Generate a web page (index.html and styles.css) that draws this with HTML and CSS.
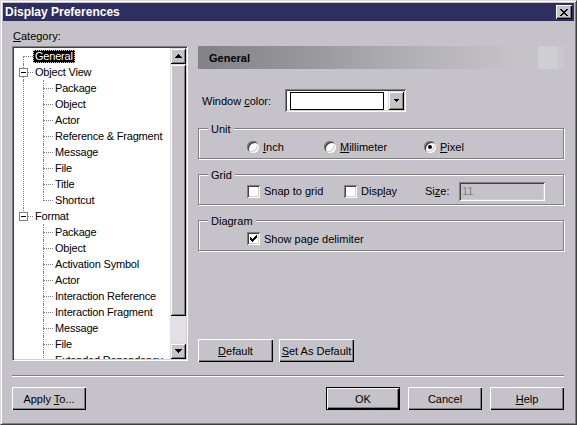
FILE: index.html
```html
<!DOCTYPE html>
<html lang="en">
<head>
    <meta charset="UTF-8">
    <title>Display Preferences</title>
    <link rel="stylesheet" href="styles.css">
</head>
<body>

<div class="dialog">
    <div class="titlebar">
        <span class="title">Display Preferences</span>
        <button class="close" type="button">
            <svg width="8" height="7" viewBox="0 0 8 7" shape-rendering="crispEdges"><path d="M0 0h2v1H0zM6 0h2v1H6zM1 1h2v1H1zM5 1h2v1H5zM2 2h4v1H2zM3 3h2v1H3zM2 4h4v1H2zM1 5h2v1H1zM5 5h2v1H5zM0 6h2v1H0zM6 6h2v1H6z" fill="#000"/></svg>
        </button>
    </div>

    <div class="content">
        <div class="main">
            <div class="cat-label"><u>C</u>ategory:</div>

            <div class="tree-box">
                <div class="tree">
                    <div class="node root first"><span class="lbl sel">General</span></div>
                    <div class="node root"><span class="toggle"></span><span class="lbl">Object View</span></div>
                    <div class="kids more">
                        <div class="node child"><span class="lbl">Package</span></div>
                        <div class="node child"><span class="lbl">Object</span></div>
                        <div class="node child"><span class="lbl">Actor</span></div>
                        <div class="node child"><span class="lbl">Reference &amp; Fragment</span></div>
                        <div class="node child"><span class="lbl">Message</span></div>
                        <div class="node child"><span class="lbl">File</span></div>
                        <div class="node child"><span class="lbl">Title</span></div>
                        <div class="node child last"><span class="lbl">Shortcut</span></div>
                    </div>
                    <div class="node root end"><span class="toggle"></span><span class="lbl">Format</span></div>
                    <div class="kids">
                        <div class="node child"><span class="lbl">Package</span></div>
                        <div class="node child"><span class="lbl">Object</span></div>
                        <div class="node child"><span class="lbl">Activation Symbol</span></div>
                        <div class="node child"><span class="lbl">Actor</span></div>
                        <div class="node child"><span class="lbl">Interaction Reference</span></div>
                        <div class="node child"><span class="lbl">Interaction Fragment</span></div>
                        <div class="node child"><span class="lbl">Message</span></div>
                        <div class="node child"><span class="lbl">File</span></div>
                        <div class="node child"><span class="lbl">Extended Dependency</span></div>
                    </div>
                </div>
                <div class="vscroll">
                    <div class="sb-btn">
                        <svg width="7" height="4" shape-rendering="crispEdges"><path d="M3 0h1v1H3zM2 1h3v1H2zM1 2h5v1H1zM0 3h7v1H0z" fill="#000"/></svg>
                    </div>
                    <div class="sb-thumb"></div>
                    <div class="sb-track"></div>
                    <div class="sb-btn">
                        <svg width="7" height="4" shape-rendering="crispEdges"><path d="M0 0h7v1H0zM1 1h5v1H1zM2 2h3v1H2zM3 3h1v1H3z" fill="#000"/></svg>
                    </div>
                </div>
            </div>

            <div class="panel">
                <div class="panel-head">General</div>

                <div class="field-row">
                    <label>Window <u>c</u>olor:</label>
                    <div class="combo">
                        <div class="swatch"></div>
                        <div class="drop">
                            <svg width="5" height="3" shape-rendering="crispEdges"><path d="M0 0h5v1H0zM1 1h3v1H1zM2 2h1v1H2z" fill="#000"/></svg>
                        </div>
                    </div>
                </div>

                <div class="group unit">
                    <span class="group-title">Unit</span>
                    <div class="opt"><span class="radio"></span><span><u>I</u>nch</span></div>
                    <div class="opt"><span class="radio"></span><span><u>M</u>illimeter</span></div>
                    <div class="opt"><span class="radio on"></span><span><u>P</u>ixel</span></div>
                </div>

                <div class="group grid">
                    <span class="group-title">Grid</span>
                    <div class="opt"><span class="check"></span><span>Snap to <u>g</u>rid</span></div>
                    <div class="opt"><span class="check"></span><span>Disp<u>l</u>ay</span></div>
                    <div class="opt"><span>Si<u>z</u>e:</span></div>
                    <div class="textbox">11</div>
                </div>

                <div class="group">
                    <span class="group-title">Diagram</span>
                    <div class="opt">
                        <span class="check">
                            <svg width="7" height="7" shape-rendering="crispEdges"><path d="M6 0h1v3H6zM5 1h1v3H5zM4 2h1v3H4zM3 3h1v3H3zM2 4h1v3H2zM1 3h1v3H1zM0 2h1v3H0z" fill="#000"/></svg>
                        </span>
                        <span>Show page delimiter</span>
                    </div>
                </div>

                <div class="panel-buttons">
                    <button class="btn" type="button"><u>D</u>efault</button>
                    <button class="btn" type="button"><u>S</u>et As Default</button>
                </div>
            </div>
        </div>

        <div class="separator"></div>

        <div class="footer">
            <button class="btn apply" type="button">Apply <u>T</u>o...</button>
            <button class="btn default" type="button">OK</button>
            <button class="btn" type="button">Cancel</button>
            <button class="btn" type="button"><u>H</u>elp</button>
        </div>
    </div>
</div>

</body>
</html>
```

FILE: styles.css
```css
body {
    margin: 0;
    font-family: "Liberation Sans", Arial, sans-serif;
    font-size: 11px;
    color: #000;
    background: #c5c3c9;
}
u {
    text-decoration: underline;
    text-underline-offset: 1px;
}
.dialog {
    width: 577px;
    height: 425px;
    box-sizing: border-box;
    display: flex;
    flex-direction: column;
    padding: 1px;
    background: #c5c3c9;
    border: 1px solid;
    border-color: #dcdadf #404040 #404040 #dcdadf;
    box-shadow: inset 1px 1px #fff, inset -1px -1px #808080;
}
.titlebar {
    height: 18px;
    margin: 1px;
    flex: none;
    display: flex;
    align-items: center;
    justify-content: space-between;
    padding: 0 2px;
    background: #2f2e60;
    color: #fff;
    font-weight: bold;
    font-size: 12px;
}
.close {
    width: 16px;
    height: 14px;
    padding: 0;
    border: 0;
    display: flex;
    align-items: center;
    justify-content: center;
    background: #c5c3c9;
    box-shadow: inset 1px 1px #fff, inset -1px -1px #000, inset -2px -2px #808080;
}

.content {
    flex: 1;
    display: flex;
    flex-direction: column;
    padding: 8px 11px 0 10px;
}
.main {
    display: grid;
    grid-template-columns: 176px 1fr;
    grid-template-rows: 16px 316px;
    column-gap: 10px;
}
.cat-label {
    line-height: 12px;
    padding-left: 1px;
}

/* tree view */
.tree-box {
    grid-column: 1;
    grid-row: 2;
    height: 315px;
    box-sizing: border-box;
    display: flex;
    padding: 1px;
    background: #fff;
    border: 1px solid;
    border-color: #808080 #fff #fff #808080;
    box-shadow: inset 1px 1px #404040, inset -1px -1px #d4d0c8;
}
.tree {
    flex: 1;
    overflow: hidden;
}
.kids {
    position: relative;
}
.kids.more::before {
    content: "";
    position: absolute;
    left: 9px;
    top: 0;
    bottom: 0;
    border-left: 1px dotted #808080;
}
.node {
    position: relative;
    height: 16px;
    padding-left: 19px;
    display: flex;
    align-items: center;
}
.node.child {
    padding-left: 39px;
}
.node::before {
    content: "";
    position: absolute;
    left: 9px;
    top: 8px;
    width: 10px;
    border-top: 1px dotted #808080;
}
.node::after {
    content: "";
    position: absolute;
    left: 9px;
    top: 0;
    bottom: 0;
    border-left: 1px dotted #808080;
}
.node.child::before,
.node.child::after {
    left: 29px;
}
.node.first::after {
    top: 8px;
}
.node.end::after,
.node.child.last::after {
    bottom: 7px;
}
.toggle {
    position: absolute;
    left: 5px;
    top: 4px;
    width: 9px;
    height: 9px;
    box-sizing: border-box;
    border: 1px solid #808080;
    background: #fff;
    z-index: 1;
}
.toggle::before {
    content: "";
    position: absolute;
    left: 1px;
    top: 3px;
    width: 5px;
    height: 1px;
    background: #000;
}
.lbl {
    padding: 0 2px;
    line-height: 13px;
    white-space: nowrap;
    letter-spacing: -0.2px;
}
.lbl.sel {
    background: #000;
    color: #fff;
    outline: 1px dotted #c8c8c8;
    outline-offset: -1px;
}

.vscroll {
    width: 16px;
    flex: none;
    display: flex;
    flex-direction: column;
    background: #e2e0e6;
}
.sb-btn,
.sb-thumb,
.drop {
    background: #c5c3c9;
    box-shadow: inset 1px 1px #dcdadf, inset -1px -1px #000, inset 2px 2px #fff, inset -2px -2px #808080;
}
.sb-btn {
    height: 16px;
    flex: none;
    display: flex;
    align-items: center;
    justify-content: center;
}
.sb-thumb {
    height: 252px;
    flex: none;
}
.sb-track {
    flex: 1;
}

/* right side */
.panel {
    grid-column: 2;
    grid-row: 2;
    display: flex;
    flex-direction: column;
}
.panel-head {
    height: 23px;
    flex: none;
    display: flex;
    align-items: center;
    padding-left: 11px;
    font-weight: bold;
    background: linear-gradient(to right, #828185 0%, #98979b 30%, #b3b2b7 60%, #c5c3c8 87%, #c6c4c9 93%, #cfced2 93% 98%, #c9c8cc 98%);
}
.field-row {
    display: flex;
    align-items: center;
    margin: 20px 0 1px;
    padding-left: 4px;
}
.field-row label {
    width: 83px;
}
.combo {
    width: 121px;
    height: 23px;
    box-sizing: border-box;
    display: flex;
    padding: 2px;
    background: #fff;
    box-shadow: inset 1px 1px #808080, inset -1px -1px #fff, inset 2px 2px #404040, inset -2px -2px #d4d0c8;
}
.swatch {
    flex: 1;
    margin: 1px 4px 0 3px;
    border: 1px solid #000;
    background: #fff;
}
.drop {
    width: 16px;
    display: flex;
    align-items: center;
    justify-content: center;
}

.group {
    position: relative;
    height: 31px;
    box-sizing: border-box;
    margin-top: 15px;
    padding: 6px 0 0 48px;
    display: flex;
    align-items: center;
    border: 1px solid #808080;
    box-shadow: inset 1px 1px #fff, 1px 1px #fff;
}
.group.grid {
    padding-top: 3px;
}
.group-title {
    position: absolute;
    top: -6px;
    left: 9px;
    padding: 0 3px;
    line-height: 13px;
    background: #c5c3c9;
}
.opt {
    display: flex;
    align-items: center;
    gap: 4px;
    white-space: nowrap;
}
.unit .opt:nth-of-type(1) { width: 77px; }
.unit .opt:nth-of-type(2) { width: 100px; }
.grid .opt:nth-of-type(1) { width: 97px; }
.grid .opt:nth-of-type(2) { width: 81px; }
.grid .opt:nth-of-type(3) { width: 34px; }

.radio {
    position: relative;
    width: 12px;
    height: 12px;
    flex: none;
    border-radius: 50%;
    background: #fff;
    box-shadow: inset 1px 1px #808080, inset -1px -1px #fff, inset 2px 2px #404040, inset -2px -2px #d4d0c8;
}
.radio.on::after {
    content: "";
    position: absolute;
    left: 4px;
    top: 4px;
    width: 4px;
    height: 4px;
    border-radius: 50%;
    background: #000;
}
.check {
    width: 13px;
    height: 13px;
    flex: none;
    display: flex;
    align-items: center;
    justify-content: center;
    background: #fff;
    box-shadow: inset 1px 1px #808080, inset -1px -1px #fff, inset 2px 2px #404040, inset -2px -2px #d4d0c8;
}
.textbox {
    width: 86px;
    height: 19px;
    box-sizing: border-box;
    padding: 0 3px;
    line-height: 19px;
    color: #808080;
    box-shadow: inset 1px 1px #808080, inset -1px -1px #fff, inset 2px 2px #404040, inset -2px -2px #d4d0c8;
}

.btn {
    width: 75px;
    height: 23px;
    box-sizing: border-box;
    padding: 0;
    border: 0;
    font: inherit;
    color: #000;
    background: #c5c3c9;
    box-shadow: inset 1px 1px #fff, inset -1px -1px #000, inset -2px -2px #808080;
}
.btn.default {
    border: 1px solid #000;
}
.panel-buttons {
    margin-top: auto;
    display: flex;
    gap: 6px;
}

.separator {
    margin-top: 13px;
    border-top: 1px solid #808080;
    border-bottom: 1px solid #fff;
}
.footer {
    display: flex;
    gap: 8px;
    margin-top: 10px;
}
.footer .btn {
    width: 74px;
}
.footer .apply {
    margin-right: auto;
}
```
